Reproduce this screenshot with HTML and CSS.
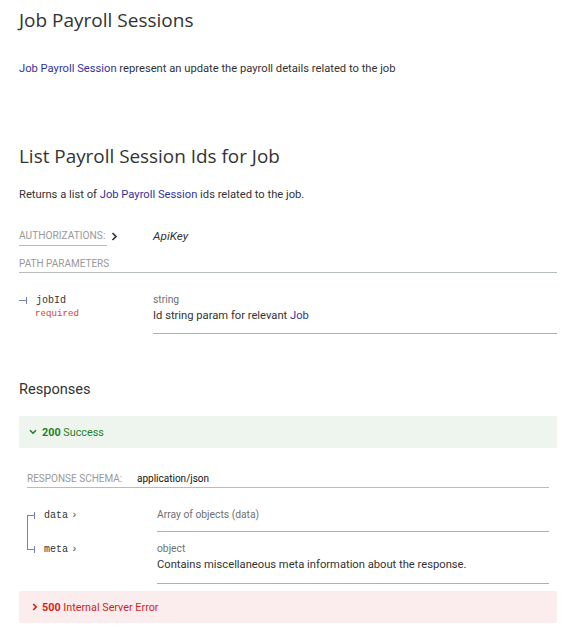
FILE: index.html
```html
<!DOCTYPE html>
<html>
<head>
<meta charset="utf-8">
<link rel="stylesheet" href="styles.css">
</head>
<body>
<section class="tag">
  <h1 class="h1">Job Payroll Sessions</h1>
  <p class="text tag-text"><a class="link">Job Payroll Session</a> represent an update the payroll details related to the job</p>
</section>

<section class="op">
  <h2 class="h2">List Payroll Session Ids for Job</h2>
  <p class="text op-text">Returns a list of <a class="link">Job Payroll Session</a> ids related to the job.</p>

  <div class="auth">
    <div class="auth-label">
      <span class="auth-title">AUTHORIZATIONS:</span>
      <svg class="chev" width="7" height="9" viewBox="0 0 7 9"><path d="M1.5 1 L5 4.5 L1.5 8" fill="none" stroke="#333" stroke-width="1.7"/></svg>
    </div>
    <div class="auth-val">ApiKey</div>
  </div>

  <h5 class="sub">PATH PARAMETERS</h5>
  <div class="params">
    <div class="prow">
      <div class="pname"><span class="mono">jobId</span><div class="req">required</div></div>
      <div class="pdet">
        <div class="type">string</div>
        <div class="desc">Id string param for relevant <a class="link">Job</a></div>
      </div>
    </div>
  </div>

  <h3 class="h3">Responses</h3>
  <div class="resp ok">
    <svg class="rchev" width="8" height="8" viewBox="0 0 8 8"><path d="M1 2.2 L4 5.2 L7 2.2" fill="none" stroke="#1d8127" stroke-width="1.6"/></svg>
    <strong>200</strong>&nbsp;Success
  </div>

  <div class="schema">
    <div class="schema-head"><span class="schema-label">RESPONSE SCHEMA:</span><span class="schema-type">application/json</span></div>
    <div class="srow srow-first">
      <div class="pname first"><span class="mono">data</span><span class="mchev">›</span></div>
      <div class="pdet">
        <div class="type">Array of objects (data)</div>
      </div>
    </div>
    <div class="srow srow-last">
      <div class="pname last"><span class="mono">meta</span><span class="mchev">›</span></div>
      <div class="pdet">
        <div class="type">object</div>
        <div class="desc">Contains miscellaneous meta information about the response.</div>
      </div>
    </div>
  </div>

  <div class="resp err">
    <svg class="rchev" width="8" height="10" viewBox="0 0 8 10"><path d="M2.2 2 L5.2 5 L2.2 8" fill="none" stroke="#d41f1c" stroke-width="1.7"/></svg>
    <strong>500</strong>&nbsp;Internal Server Error
  </div>
</section>
</body>
</html>
```

FILE: styles.css
```css
* { box-sizing: border-box; }
body {
  margin: 0;
  padding: 0 17px 0 19px;
  font-family: Roboto, "Liberation Sans", sans-serif;
  font-size: 11.2px;
  color: #333;
  background: #fff;
}
.h1 {
  font-family: "Open Sans", sans-serif;
  font-weight: 400;
  font-size: 19px;
  line-height: 24px;
  margin: 8px 0 0 0;
  color: #333;
}
.text {
  margin: 0;
  line-height: 18px;
}
.tag-text { margin-top: 28px; }
.link { color: #32329f; text-decoration: none; }
.op { margin-top: 66px; }
.h2 {
  font-family: "Open Sans", sans-serif;
  font-weight: 400;
  font-size: 18.9px;
  line-height: 24px;
  margin: 0;
  color: #333;
}
.op-text { margin-top: 18px; }
.auth {
  display: flex;
  align-items: flex-start;
  margin-top: 24px;
}
.auth-label {
  width: 134px;
  display: flex;
  align-items: center;
}
.auth-title {
  color: #999;
  font-size: 10.2px;
  line-height: 16px;
  padding-bottom: 1px;
  border-bottom: 1px solid #b7bcbf;
  padding-right: 2px;
}
.chev { margin-left: 4px; margin-bottom: 1px; }
.auth-val {
  font-style: italic;
  font-size: 11.8px;
  line-height: 16px;
  color: #333;
}
.sub {
  margin: 10px 0 0 0;
  font-weight: 400;
  font-size: 10px;
  line-height: 15px;
  color: #999;
  border-bottom: 1px solid #b7bcbf;
  padding-bottom: 1px;
}
.params { margin-top: 19px; }
.prow, .srow { display: flex; }
.pname {
  position: relative;
  width: 134px;
  padding-left: 17px;
  line-height: 16px;
}
.mono {
  font-family: "Liberation Mono", monospace;
  font-size: 10px;
  line-height: 16px;
  color: #333;
}
.req {
  font-family: "Liberation Mono", monospace;
  font-size: 9.2px;
  line-height: 10px;
  color: #e53935;
  margin-left: -1px;
}
.pname::before {
  content: "";
  position: absolute;
  left: 0;
  top: 8px;
  width: 8px;
  height: 1px;
  background: #7c7cbb;
}
.pname::after {
  content: "";
  position: absolute;
  left: 7px;
  top: 5px;
  width: 1px;
  height: 7px;
  background: #7c7cbb;
}
.pname.first > .mono::before, .pname.last > .mono::before {
  content: "";
  position: absolute;
  left: 0;
  width: 1px;
  background: #7c7cbb;
}
.pname.first > .mono::before { top: 8px; bottom: 0; }
.pname.last > .mono::before { top: 0; height: 18px; }
.pdet {
  flex: 1;
  border-bottom: 1px solid #9fb4be;
  padding-bottom: 9px;
}
.type {
  color: #707070;
  font-size: 10.3px;
  line-height: 16px;
}
.desc { line-height: 16px; }
.h3 {
  font-weight: 400;
  font-size: 14.6px;
  line-height: 20px;
  margin: 45px 0 0 0;
  color: #333;
}
.resp {
  display: flex;
  align-items: center;
  height: 32px;
  padding-left: 10px;
  font-size: 10.8px;
  border-radius: 2px;
}
.resp strong { font-weight: 700; }
.rchev { margin-right: 5px; }
.ok {
  margin-top: 17px;
  background: #eef5ef;
  color: #1d8127;
}
.err {
  margin-top: 7px;
  background: #fbeded;
  color: #d41f1c;
}
.err .rchev { margin-left: 2px; margin-right: 3px; }
.schema { padding: 0 8px; margin-top: 23px; }
.schema-head {
  display: flex;
  align-items: center;
  border-bottom: 1px solid #b7bcbf;
  padding-bottom: 1px;
  line-height: 15px;
}
.schema-label { color: #999; font-size: 10px; width: 110px; }
.schema-type { font-size: 10px; color: #111; }
.schema .pname { width: 130px; }
.srow-first { margin-top: 19px; }
.srow-first .pdet { padding-bottom: 8px; }
.srow-last .pdet { padding-bottom: 10px; }
.srow-last .pdet, .srow-last .pname { padding-top: 9px; }
.srow-last .pname::before { top: 17px; }
.srow-last .pname::after { top: 14px; }
.mchev { font-family: "Liberation Mono", monospace; color: #555; margin-left: 3px; font-size: 11px; }
```
